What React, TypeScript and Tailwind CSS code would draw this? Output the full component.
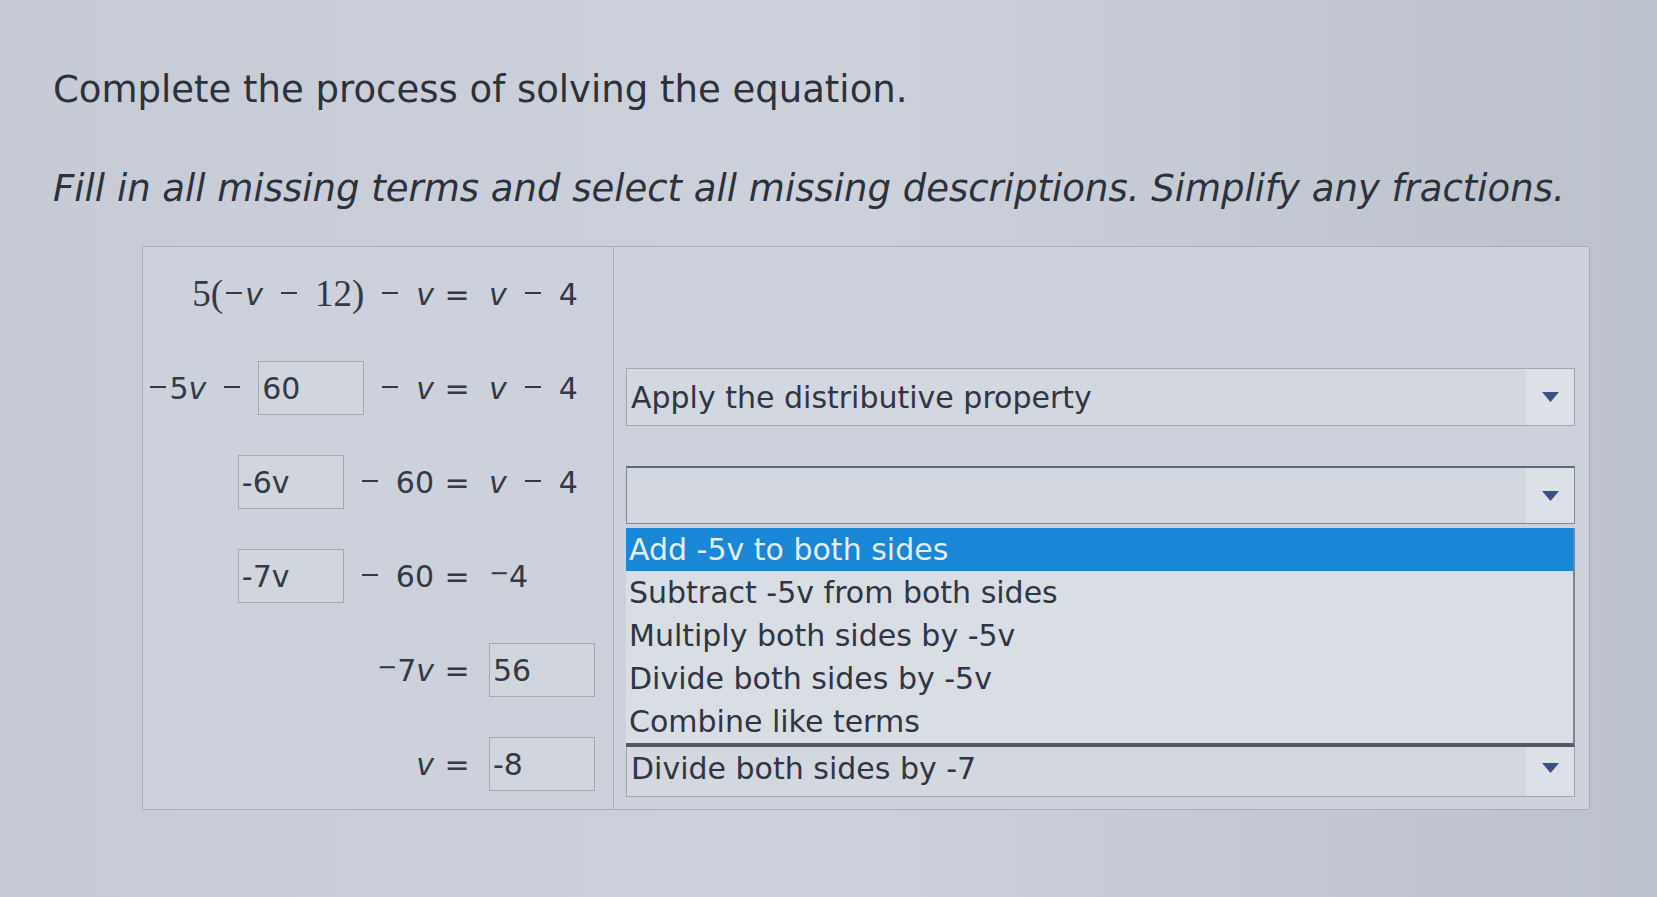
import type { ReactNode } from "react";
import clsx from "clsx";

const options = [
  "Add -5v to both sides",
  "Subtract -5v from both sides",
  "Multiply both sides by -5v",
  "Divide both sides by -5v",
  "Combine like terms",
];

const V = () => <span className="italic">v</span>;

// math minus drawn as a bar so its length and height match the reference
const Minus = ({ tight }: { tight?: boolean }) => (
  <span
    className={clsx(
      "mb-[3px] inline-block h-[2px] w-[16px] bg-current",
      tight && "ml-[3px] mr-[3px]",
    )}
  />
);

const Box = ({ value }: { value: string }) => (
  <div className="flex h-[54px] w-[106px] items-center border border-[#a3a8b1] bg-[#d1d5de] pl-[3px] not-italic">
    {value}
  </div>
);

const Row = ({ left, right }: { left: ReactNode; right: ReactNode }) => (
  <div className="flex h-[94px] items-center">
    <div className="flex w-[291px] items-center justify-end gap-[18px]">{left}</div>
    <div className="w-[46px] text-center">=</div>
    <div className="flex items-center gap-[18px] pl-[9px]">{right}</div>
  </div>
);

const Arrow = () => (
  <div className="flex w-[48px] items-center justify-center bg-[#dce0e7]">
    <svg width="17" height="10" viewBox="0 0 17 10">
      <path d="M0 0h17L8.5 10z" fill="#3b5283" />
    </svg>
  </div>
);

const Select = ({ value, focused }: { value?: string; focused?: boolean }) => (
  <div
    className={clsx(
      "flex h-[58px] items-stretch border bg-[#d3d7df]",
      focused ? "border-[#7f8893] border-t-2 border-t-[#5d6b7c]" : "border-[#a2a7b0]",
    )}
  >
    <div className="flex flex-1 items-center pl-[4px]">{value}</div>
    <Arrow />
  </div>
);

const App = () => {
  return (
    <div className="min-h-[897px] bg-linear-to-r from-[#c6cbd6] via-[#ccd1db] to-[#bcc2cc] pl-[53px] pt-[68px] font-['DejaVu_Sans','Verdana',sans-serif] text-[#2c313c]">
      <h1 className="text-[37px] leading-[43px]">
        {"Complete the process of solving the equation."}
      </h1>
      <p className="mt-[56px] text-[37px] italic leading-[43px]">
        {"Fill in all missing terms and select all missing descriptions. Simplify any fractions."}
      </p>

      <div className="ml-[89px] mt-[36px] flex h-[564px] w-[1448px] rounded-[3px] border border-[#a9aeb8] bg-[#ccd1db] text-[30px]">
        {/* equation steps */}
        <div className="w-[471px] shrink-0 border-r border-[#a9aeb8] text-[#343945]">
          <Row
            left={
              <>
                <span className="flex items-center">
                  <span className="font-['Liberation_Serif',serif] text-[37px]">5(</span>
                  <Minus tight />
                  <V />
                </span>
                <Minus />
                <span className="font-['Liberation_Serif',serif] text-[37px]">12)</span>
                <Minus />
                <V />
              </>
            }
            right={
              <>
                <V />
                <Minus />
                <span>4</span>
              </>
            }
          />
          <Row
            left={
              <>
                <span className="flex items-center">
                  <Minus tight />
                  5<V />
                </span>
                <Minus />
                <Box value="60" />
                <Minus />
                <V />
              </>
            }
            right={
              <>
                <V />
                <Minus />
                <span>4</span>
              </>
            }
          />
          <Row
            left={
              <>
                <Box value="-6v" />
                <Minus />
                <span>60</span>
              </>
            }
            right={
              <>
                <V />
                <Minus />
                <span>4</span>
              </>
            }
          />
          <Row
            left={
              <>
                <Box value="-7v" />
                <Minus />
                <span>60</span>
              </>
            }
            right={
              <span className="flex items-center">
                <span className="-mt-[6px] text-[24px]">−</span>
                <span>4</span>
              </span>
            }
          />
          <Row
            left={
              <span className="flex items-center">
                <span className="-mt-[6px] text-[24px]">−</span>
                <span>7</span>
                <V />
              </span>
            }
            right={<Box value="56" />}
          />
          <Row left={<V />} right={<Box value="-8" />} />
        </div>

        {/* descriptions */}
        <div className="flex flex-1 flex-col pl-[12px] pr-[14px] pt-[121px] text-[#2f3542]">
          <Select value="Apply the distributive property" />
          <div className="relative mt-[40px]">
            <Select focused />
            <ul className="absolute left-0 right-0 top-full z-10 mt-[4px] border-b-4 border-r-2 border-b-[#545a63] border-r-[#7d838c] bg-[#d9dde4]">
              {options.map((opt, i) => (
                <li
                  key={opt}
                  className={clsx(
                    "flex h-[43px] items-center pl-[3px]",
                    i === 0 && "bg-[#1a86d6] text-[#e3eefa]",
                  )}
                >
                  {opt}
                </li>
              ))}
            </ul>
          </div>
          <div className="mt-[215px]">
            <Select value="Divide both sides by -7" />
          </div>
        </div>
      </div>
    </div>
  );
};

export default App;
